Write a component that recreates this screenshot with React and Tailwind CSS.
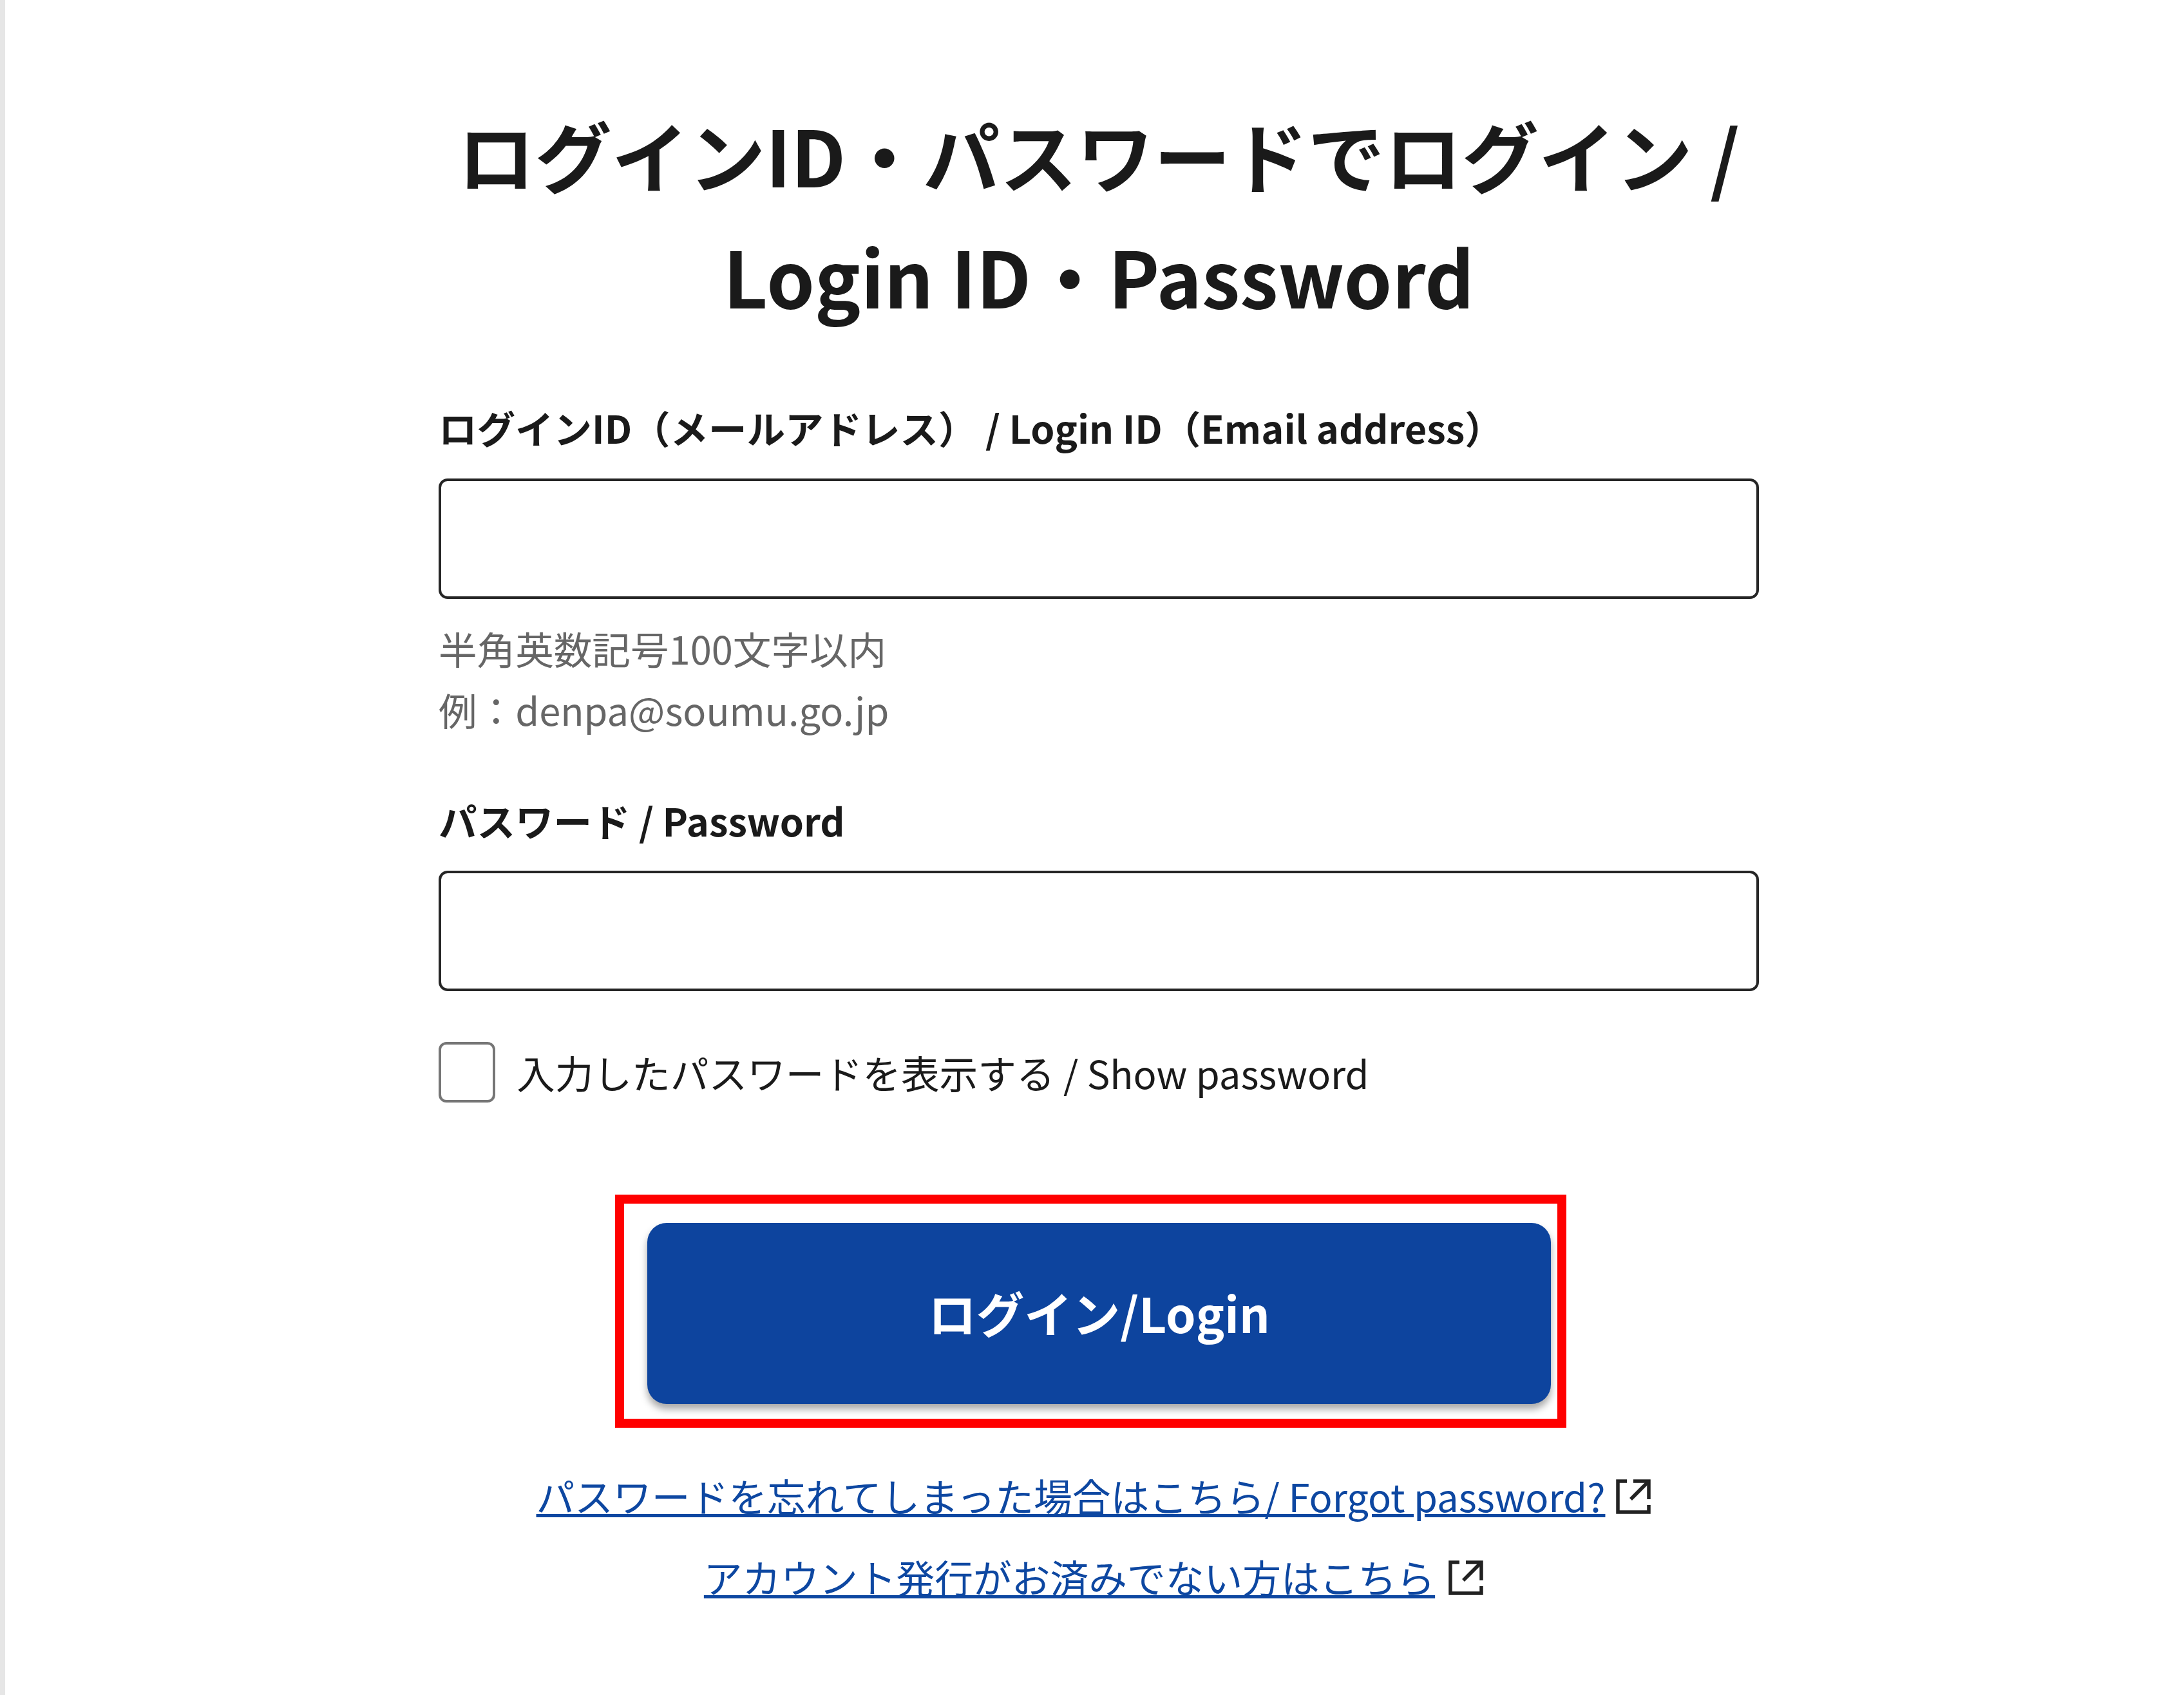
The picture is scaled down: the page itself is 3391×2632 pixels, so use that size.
const ExternalIcon = ({ className }) => (
  <svg className={className} viewBox="0 0 54 54" fill="none" stroke="#222222" strokeWidth="5.5">
    <path d="M17 3H3v48h48V40" />
    <path d="M27 3h24v28" />
    <path d="M23 31L49 5" />
  </svg>
);

const Field = () => (
  <input
    type="text"
    className="block w-full h-[187px] bg-white border-[4px] border-[#262626] rounded-[14px]"
  />
);

const App = () => {
  return (
    <div
      className="flex min-h-[2632px] w-full bg-white text-[#1a1a1a]"
      style={{ fontFamily: '"Noto Sans CJK JP", "Noto Sans", sans-serif' }}
    >
      <div className="w-[8px] shrink-0 bg-[#e6e6e6]" />
      <div className="ml-[673px] w-[2050px] pt-[145px]">
        <h1 className="text-center text-[119.5px] leading-[188px] font-bold -mx-[100px]">
          ログインID・パスワードでログイン /<br />
          Login ID・Password
        </h1>

        <label className="block mt-[92px] text-[59.5px] leading-[100px] font-bold">
          ログインID（メールアドレス） / Login ID（Email address）
        </label>
        <div className="mt-[30px]">
          <Field />
        </div>
        <p className="mt-[29px] text-[59.6px] leading-[95px] text-[#666666]">
          半角英数記号100文字以内
          <br />
          例：denpa@soumu.go.jp
        </p>

        <label className="block mt-[74px] text-[59.5px] leading-[100px] font-bold">
          パスワード / Password
        </label>
        <div className="mt-[29px]">
          <Field />
        </div>

        <div className="mt-[79px] flex items-center gap-[33px]">
          <div className="w-[88px] h-[94px] shrink-0 bg-white border-[4px] border-[#767676] rounded-[12px]" />
          <span className="text-[59.7px] leading-[94px]">
            入力したパスワードを表示する / Show password
          </span>
        </div>

        <div className="mt-[143px] ml-[274px] w-[1477px] h-[362px] border-[14px] border-[#ff0000] pl-[36px] pt-[30px]">
          <button
            type="button"
            className="flex items-center justify-center w-[1403px] h-[281px] pb-[3px] rounded-[30px] bg-[#0d449e] text-white text-[74.5px] font-bold shadow-[0_8px_12px_rgba(0,0,0,0.35)]"
          >
            ログイン/Login
          </button>
        </div>

        <div className="mt-[42px] pr-[16px] flex flex-col items-center text-[59.75px] leading-[126px]">
          <div className="flex items-center gap-[17px]">
            <a href="#" className="text-[#0d47a1] underline">
              パスワードを忘れてしまった場合はこちら/ Forgot password?
            </a>
            <ExternalIcon className="w-[54px] h-[54px] mt-[4px]" />
          </div>
          <div className="flex items-center gap-[21px]">
            <a href="#" className="text-[#0d47a1] underline">
              アカウント発行がお済みでない方はこちら
            </a>
            <ExternalIcon className="w-[54px] h-[54px] mt-[4px]" />
          </div>
        </div>
      </div>
    </div>
  );
};

export default App;
